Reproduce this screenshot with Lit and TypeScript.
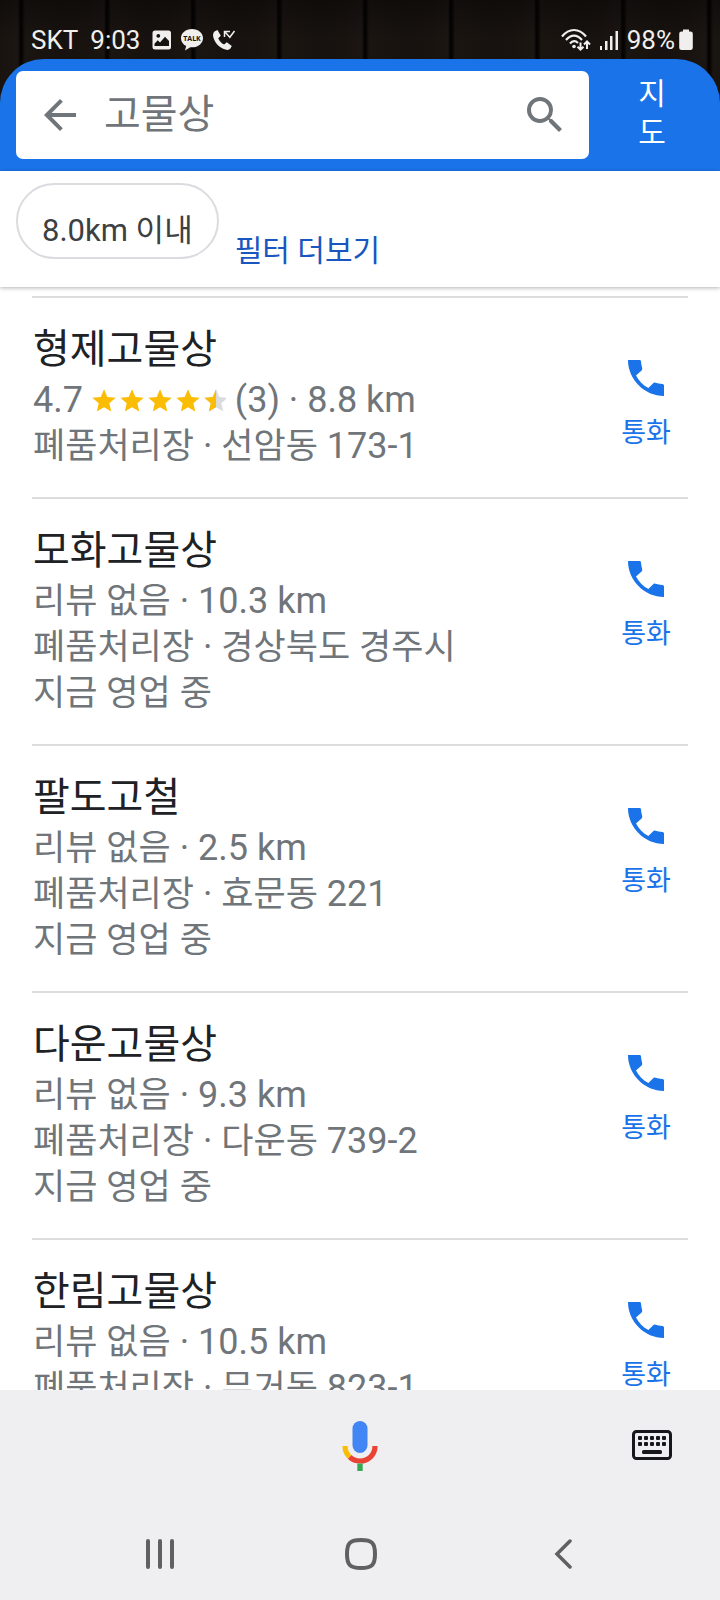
import { LitElement, html, svg, css, nothing } from "lit";
import { customElement, property } from "lit/decorators.js";

interface Place {
  name: string;
  rating?: string;
  reviews?: number;
  distance: string;
  address: string;
  status?: string;
}

const PLACES: Place[] = [
  { name: "형제고물상", rating: "4.7", reviews: 3, distance: "8.8 km", address: "선암동 173-1" },
  { name: "모화고물상", distance: "10.3 km", address: "경상북도 경주시", status: "지금 영업 중" },
  { name: "팔도고철", distance: "2.5 km", address: "효문동 221", status: "지금 영업 중" },
  { name: "다운고물상", distance: "9.3 km", address: "다운동 739-2", status: "지금 영업 중" },
  { name: "한림고물상", distance: "10.5 km", address: "무거동 823-1", status: "지금 영업 중" },
];

const STAR = "M12 17.270L18.180 21l-1.640-7.030L22 9.240l-7.190-.610L12 2 9.190 8.630 2 9.240l5.460 4.730L5.820 21z";
const HALF_STAR = "M12 17.270V2L9.190 8.630 2 9.240l5.460 4.730L5.820 21z";

const reset = css`
  * {
    box-sizing: border-box;
  }
  button,
  input {
    margin: 0;
    padding: 0;
    border: 0;
    background: none;
    font: inherit;
    color: inherit;
  }
  svg {
    display: block;
    flex: none;
  }
`;

@customElement("status-bar")
class StatusBar extends LitElement {
  static styles = [
    reset,
    css`
      :host {
        display: flex;
        justify-content: space-between;
        align-items: center;
        height: 59px;
        padding: 20px 27px 0 31px;
        color: #f0efed;
        font-size: 26px;
        line-height: 36px;
      }
      .group {
        display: flex;
        align-items: center;
      }
      .left {
        gap: 12px;
      }
      .icons {
        display: flex;
        align-items: center;
        gap: 8px;
      }
      .right {
        gap: 8px;
      }
      .power {
        display: flex;
        align-items: center;
        gap: 4px;
      }
      .talk {
        font: 700 7px "Open Sans", sans-serif;
      }
    `,
  ];

  render() {
    return html`
      <div class="group left">
        <span>SKT</span>
        <span>9:03</span>
        <span class="icons">
          <svg width="20" height="20" viewBox="0 0 20 20" aria-hidden="true">
            <path fill="currentColor" fill-rule="evenodd" d="M3 0.5h13.500a2.500 2.500 0 0 1 2.500 2.500v14a2.500 2.500 0 0 1-2.500 2.500h-13.500a2.500 2.500 0 0 1-2.500-2.500v-14a2.500 2.500 0 0 1 2.500-2.500zM2.500 16h14.500v-5l-4-4.200-5 5.700-2.300-2.300-3.200 3.500zM6.300 4a1.900 1.900 0 1 0 0.010 0z"/>
          </svg>
          <svg width="24" height="22" viewBox="0 0 24 22" aria-hidden="true">
            <path fill="currentColor" d="M12 0C5.700 0 1 4 1 9.200c0 3.400 2 6.300 5.200 7.800l-1.200 4.500 5.300-3.300 1.700.100c6.300 0 11-4 11-9.100S18.300 0 12 0z"/>
            <text class="talk" x="12" y="12" text-anchor="middle" fill="#14110f">TALK</text>
          </svg>
          <svg width="24" height="22" viewBox="0 0 24 22" aria-hidden="true">
            <path fill="currentColor" d="M2.800 2.200 5.500 1l3.300 5.700-2.600 2.500c1.200 3 3.300 5.200 5.900 6.400l2.700-2.300 5 3.600-1.400 2.700c-1 1.300-3 1.600-5 1C7 18.600 2.700 13.900 1.200 7.800.8 5.500 1.300 3.300 2.800 2.200z"/>
            <path fill="none" stroke="currentColor" stroke-width="1.500" d="M12.500 8V2.500H18M12.800 2.800l5 5.500L22.500 2"/>
          </svg>
        </span>
      </div>
      <div class="group right">
        <svg width="30" height="24" viewBox="0 0 30 24" aria-hidden="true">
          <g fill="none" stroke="currentColor" stroke-width="2.200">
            <path d="M1 8.500C8-.200 18-.200 25 8.500"/>
            <path d="M5 12c5-5.800 11-5.800 16 0"/>
            <path d="M9 15.500c2.700-3 5.500-3 8-.500"/>
            <path stroke-width="2" d="M19.500 14.500v7M16.500 18.700l3 3 3-3M26 21v-6.500M23 16.500l3-3 3 3"/>
          </g>
          <circle cx="13" cy="18.500" r="1.800" fill="currentColor"/>
        </svg>
        <svg width="20" height="22" viewBox="0 0 20 22" fill="currentColor" aria-hidden="true">
          <rect x="1" y="17" width="2" height="4"/>
          <rect x="6" y="12" width="2.500" height="9"/>
          <rect x="11" y="7" width="2.500" height="14"/>
          <rect x="16.500" y="2" width="2.500" height="19"/>
        </svg>
        <span class="power">
          <span>98%</span>
          <svg width="14" height="22" viewBox="0 0 14 22" aria-hidden="true">
            <path fill="currentColor" d="M4 0.500h6v2h1.500a2.300 2.300 0 0 1 2.300 2.300v14a2.300 2.300 0 0 1-2.300 2.300h-9a2.300 2.300 0 0 1-2.300-2.300v-14a2.300 2.300 0 0 1 2.300-2.300h1.500z"/>
          </svg>
        </span>
      </div>
    `;
  }
}

@customElement("place-row")
class PlaceRow extends LitElement {
  @property({ attribute: false }) place!: Place;

  static styles = [
    reset,
    css`
      :host {
        display: flex;
        justify-content: space-between;
        align-items: flex-start;
        padding: 26px 0 28px;
        border-top: 2px solid #dcdcdc;
      }
      .info {
        min-width: 0;
        padding-left: 1px;
        color: #70757a;
        font-size: 35px;
        line-height: 46px;
      }
      .name {
        margin: 0 0 1px;
        color: #202124;
        font-size: 40px;
        font-weight: 400;
        line-height: 52px;
      }
      .line {
        height: 46px;
        margin: 0;
        white-space: nowrap;
      }
      .latin {
        font-size: 36px;
      }
      .stars {
        display: inline-block;
        vertical-align: -3px;
      }
      .call {
        display: flex;
        flex: none;
        flex-direction: column;
        align-items: center;
        gap: 13px;
        width: 84px;
        margin-top: 30px;
        color: #1a73e8;
        font-size: 27px;
        line-height: 36px;
      }
    `,
  ];

  // Digits, Latin letters and separators are set one step larger than Hangul.
  private mixed(text: string) {
    return text
      .split(/([ -~·]+)/)
      .filter(Boolean)
      .map((run) => (/^[ -~·]/.test(run) ? html`<span class="latin">${run}</span>` : run));
  }

  private stars() {
    return html`<svg class="stars" width="134" height="28" viewBox="0 0 134 28" role="img" aria-label="별점">
      ${[0, 1, 2, 3].map((i) => svg`<path fill="#fbbc04" transform="translate(${i * 28 - 2} 0) scale(1.17)" d=${STAR} />`)}
      <path fill="#dadce0" transform="translate(110 0) scale(1.17)" d=${STAR} />
      <path fill="#fbbc04" transform="translate(110 0) scale(1.17)" d=${HALF_STAR} />
    </svg>`;
  }

  render() {
    const p = this.place;
    return html`
      <div class="info">
        <h2 class="name">${p.name}</h2>
        <p class="line">${
          p.rating
            ? html`${this.mixed(`${p.rating} `)}${this.stars()}${this.mixed(` (${p.reviews}) · ${p.distance}`)}`
            : this.mixed(`리뷰 없음 · ${p.distance}`)
        }</p>
        <p class="line">${this.mixed(`폐품처리장 · ${p.address}`)}</p>
        ${p.status ? html`<p class="line">${this.mixed(p.status)}</p>` : nothing}
      </div>
      <button class="call" type="button">
        <svg width="48" height="48" viewBox="0 0 24 24" aria-hidden="true">
          <path fill="currentColor" d="M3 3h5.800c.500 0 .600.300.700.700.100 1.200.300 2.300.600 3.400.100.400 0 .800-.300 1.100L7 10.800c1.400 2.700 3.500 4.900 6.200 6.200l2.400-2.400c.300-.300.700-.400 1.100-.200 1.100.300 2.200.500 3.400.600.500 0 .900.300.900.800V21C11.300 21 3 12.800 3 3z"/>
        </svg>
        <span>통화</span>
      </button>
    `;
  }
}

@customElement("app-root")
class AppRoot extends LitElement {
  static styles = [
    reset,
    css`
      :host {
        display: flex;
        flex-direction: column;
        height: 100vh;
        overflow: hidden;
        background: #fff;
        font-family: Roboto, "Noto Sans CJK KR", sans-serif;
      }
      .top {
        flex: none;
        background:
          linear-gradient(rgba(0, 0, 0, 0.35), rgba(0, 0, 0, 0) 40px),
          repeating-linear-gradient(
            90deg,
            #191310 0,
            #1c1613 18px,
            #060403 20px,
            #060403 22px,
            #1b1511 25px,
            #17120f 60px,
            #191310 86px
          );
      }
      .header {
        display: flex;
        align-items: center;
        justify-content: space-between;
        height: 112px;
        padding: 0 53px 0 16px;
        border-radius: 44px 44px 0 0;
        background: #1a73e8;
      }
      .search {
        display: flex;
        flex: 1;
        min-width: 0;
        align-items: center;
        height: 88px;
        padding: 0 20px;
        border-radius: 7px;
        background: #fff;
        color: #70757a;
      }
      .query {
        flex: 1;
        width: 0;
        min-width: 0;
        height: 66px;
        margin: 0 20px;
        padding-bottom: 8px;
        outline: none;
        font-size: 40px;
      }
      .map {
        flex: none;
        width: 30px;
        margin: 0 0 4px 48px;
        color: #fff;
        font-size: 30px;
        line-height: 39px;
        word-break: break-all;
      }
      .filters {
        display: flex;
        flex: none;
        gap: 16px;
        height: 116px;
        padding: 12px 16px;
        background: #fff;
        box-shadow: 0 1px 4px rgba(0, 0, 0, 0.3);
        font-size: 30px;
        line-height: 40px;
        z-index: 1;
      }
      .chip {
        height: 76px;
        padding: 20px 24px 0;
        border: 2px solid #dadce0;
        border-radius: 38px;
        color: #3c4043;
        font-size: 31px;
      }
      .more {
        align-self: flex-end;
        margin-bottom: 4px;
        color: #1a56c0;
        text-decoration: none;
      }
      .list {
        flex: 1;
        min-height: 0;
        overflow: hidden;
        padding: 9px 32px 0;
      }
      .dock {
        flex: none;
        background: #efeff1;
        color: #606062;
      }
      .voice {
        display: grid;
        grid-template-columns: 1fr auto 1fr;
        align-items: center;
        height: 112px;
        padding: 0 48px;
      }
      .mic {
        grid-column: 2;
      }
      .keys {
        justify-self: end;
        padding-bottom: 2px;
        color: #17181c;
      }
      .nav {
        display: grid;
        grid-template-columns: repeat(3, 1fr);
        place-items: center;
        height: 98px;
        padding: 6px 56px 0 59px;
      }
    `,
  ];

  render() {
    return html`
      <div class="top">
        <status-bar></status-bar>
        <header class="header">
          <form class="search" role="search" @submit=${(e: Event) => e.preventDefault()}>
            <button type="button" aria-label="뒤로">
              <svg width="48" height="48" viewBox="0 0 24 24" aria-hidden="true">
                <path fill="currentColor" d="M20 11H7.830l5.590-5.590L12 4l-8 8 8 8 1.410-1.410L7.830 13H20v-2z"/>
              </svg>
            </button>
            <input class="query" type="text" aria-label="검색어" .value=${"고물상"} />
            <button type="submit" aria-label="검색">
              <svg width="48" height="48" viewBox="0 0 24 24" aria-hidden="true">
                <path fill="currentColor" d="M15.500 14h-.790l-.280-.270A6.471 6.471 0 0 0 16 9.500 6.500 6.500 0 1 0 9.500 16c1.610 0 3.090-.590 4.230-1.570l.270.280v.790l5 4.990L20.490 19l-4.990-5zm-6 0C7.010 14 5 11.990 5 9.500S7.010 5 9.500 5 14 7.010 14 9.500 11.990 14 9.500 14z"/>
              </svg>
            </button>
          </form>
          <button class="map" type="button">지도</button>
        </header>
      </div>
      <div class="filters">
        <button class="chip" type="button">8.0km 이내</button>
        <a class="more" href="#filters">필터 더보기</a>
      </div>
      <main class="list">${PLACES.map((p) => html`<place-row .place=${p}></place-row>`)}</main>
      <footer class="dock">
        <div class="voice">
          <button class="mic" type="button" aria-label="음성 입력">
            <svg width="36" height="50" viewBox="0 0 36 50" aria-hidden="true">
              <rect x="10.500" y="0" width="15" height="32" rx="7.500" fill="#4285f4"/>
              <path fill="none" stroke="#ea4335" stroke-width="5.200" d="M33 25c0 8.800-6.700 15-15 15-4 0-7.700-1.400-10.400-4.100"/>
              <path fill="none" stroke="#fbbc05" stroke-width="5.200" d="M3 25c0 4.400 1.700 8.200 4.600 10.900"/>
              <rect x="15.300" y="42.500" width="5.400" height="7.500" fill="#34a853"/>
            </svg>
          </button>
          <button class="keys" type="button" aria-label="키보드">
            <svg width="40" height="30" viewBox="0 0 40 30" aria-hidden="true">
              <rect x="1.500" y="1.500" width="37" height="27" rx="3" fill="none" stroke="currentColor" stroke-width="3"/>
              ${[6, 12, 18, 24, 30].map(
                (x) => svg`<rect x=${x} y="6" width="4" height="4" rx="1" fill="currentColor"/>
                  <rect x=${x} y="12" width="4" height="4" rx="1" fill="currentColor"/>`
              )}
              <rect x="10" y="20" width="20" height="4" rx="1.500" fill="currentColor"/>
            </svg>
          </button>
        </div>
        <nav class="nav">
          <button type="button" aria-label="최근 앱">
            <svg width="28" height="30" viewBox="0 0 28 30" fill="none" stroke="currentColor" stroke-width="4" stroke-linecap="round" aria-hidden="true">
              <path d="M2 2v26M14 2v26M26 2v26"/>
            </svg>
          </button>
          <button type="button" aria-label="홈">
            <svg width="32" height="32" viewBox="0 0 32 32" fill="none" stroke="currentColor" stroke-width="4" aria-hidden="true">
              <path d="M16 2C27 2 30 5 30 16S27 30 16 30 2 27 2 16 5 2 16 2z"/>
            </svg>
          </button>
          <button type="button" aria-label="뒤로 가기">
            <svg width="18" height="30" viewBox="0 0 18 30" fill="none" stroke="currentColor" stroke-width="3.500" stroke-linecap="round" aria-hidden="true">
              <path d="M16 2 3 15l13 13"/>
            </svg>
          </button>
        </nav>
      </footer>
    `;
  }
}
